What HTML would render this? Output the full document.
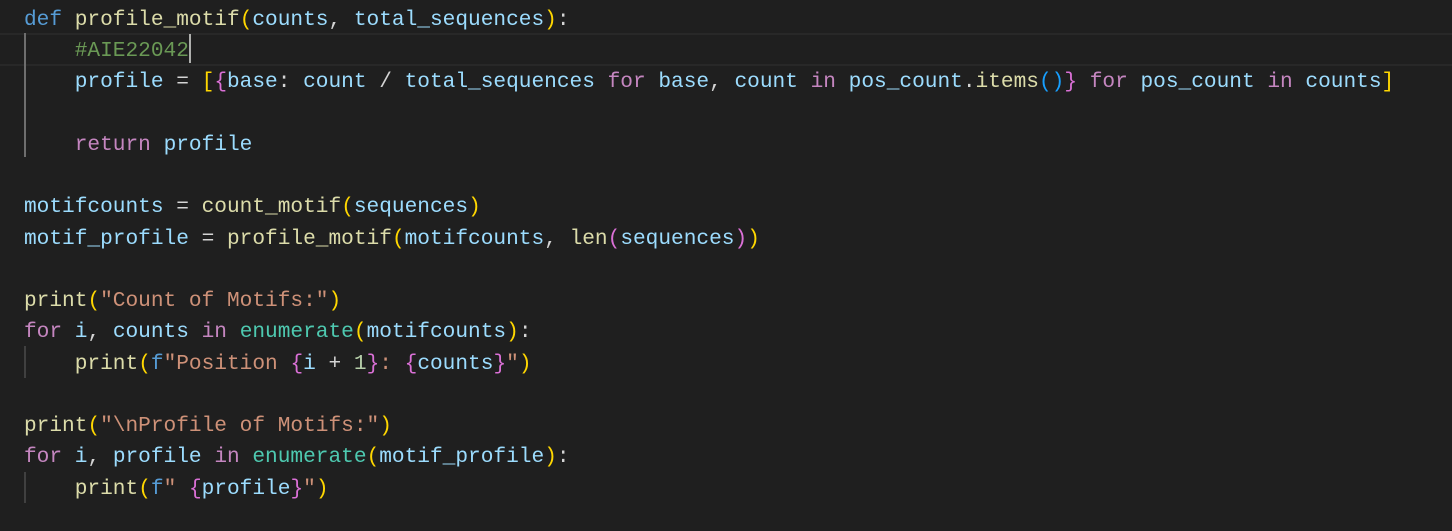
<!DOCTYPE html>
<html><head><meta charset="utf-8"><style>
body{margin:0;background:#1f1f1f;width:1452px;height:531px;overflow:hidden;position:relative}
.l{position:absolute;left:24px;height:31px;line-height:31px;font-family:"Liberation Mono",monospace;font-size:21.15px;color:#d4d4d4;white-space:pre}
.k{color:#569cd6}.f{color:#dcdcaa}.v{color:#9cdcfe}.c{color:#c586c0}.m{color:#6a9955}.s{color:#ce9178}.t{color:#4ec9b0}.n{color:#b5cea8}
.b1{color:#ffd700}.b2{color:#da70d6}.b3{color:#179fff}
.g{position:absolute;left:24px;width:2px;background:#404040}
</style></head><body>
<div style="position:absolute;left:0;top:33px;width:1452px;height:29px;border-top:2px solid #282828;border-bottom:2px solid #282828"></div>
<div class="g" style="top:33px;height:124px;background:#6e6e6e"></div>
<div class="g" style="top:346px;height:32px"></div>
<div class="g" style="top:472px;height:31px"></div>
<div style="position:absolute;left:189px;top:34px;width:2px;height:29px;background:#aeafad"></div>
<div class="l" style="top:5px"><span class="k">def</span> <span class="f">profile_motif</span><span class="b1">(</span><span class="v">counts</span>, <span class="v">total_sequences</span><span class="b1">)</span>:</div>
<div class="l" style="top:36px">    <span class="m">#AIE22042</span></div>
<div class="l" style="top:67px">    <span class="v">profile</span> = <span class="b1">[</span><span class="b2">{</span><span class="v">base</span>: <span class="v">count</span> / <span class="v">total_sequences</span> <span class="c">for</span> <span class="v">base</span>, <span class="v">count</span> <span class="c">in</span> <span class="v">pos_count</span>.<span class="f">items</span><span class="b3">()</span><span class="b2">}</span> <span class="c">for</span> <span class="v">pos_count</span> <span class="c">in</span> <span class="v">counts</span><span class="b1">]</span></div>
<div class="l" style="top:130px">    <span class="c">return</span> <span class="v">profile</span></div>
<div class="l" style="top:192px"><span class="v">motifcounts</span> = <span class="f">count_motif</span><span class="b1">(</span><span class="v">sequences</span><span class="b1">)</span></div>
<div class="l" style="top:224px"><span class="v">motif_profile</span> = <span class="f">profile_motif</span><span class="b1">(</span><span class="v">motifcounts</span>, <span class="f">len</span><span class="b2">(</span><span class="v">sequences</span><span class="b2">)</span><span class="b1">)</span></div>
<div class="l" style="top:286px"><span class="f">print</span><span class="b1">(</span><span class="s">"Count of Motifs:"</span><span class="b1">)</span></div>
<div class="l" style="top:317px"><span class="c">for</span> <span class="v">i</span>, <span class="v">counts</span> <span class="c">in</span> <span class="t">enumerate</span><span class="b1">(</span><span class="v">motifcounts</span><span class="b1">)</span>:</div>
<div class="l" style="top:349px">    <span class="f">print</span><span class="b1">(</span><span class="k">f</span><span class="s">"Position </span><span class="b2">{</span><span class="v">i</span> + <span class="n">1</span><span class="b2">}</span><span class="s">: </span><span class="b2">{</span><span class="v">counts</span><span class="b2">}</span><span class="s">"</span><span class="b1">)</span></div>
<div class="l" style="top:411px"><span class="f">print</span><span class="b1">(</span><span class="s">"\nProfile of Motifs:"</span><span class="b1">)</span></div>
<div class="l" style="top:442px"><span class="c">for</span> <span class="v">i</span>, <span class="v">profile</span> <span class="c">in</span> <span class="t">enumerate</span><span class="b1">(</span><span class="v">motif_profile</span><span class="b1">)</span>:</div>
<div class="l" style="top:474px">    <span class="f">print</span><span class="b1">(</span><span class="k">f</span><span class="s">" </span><span class="b2">{</span><span class="v">profile</span><span class="b2">}</span><span class="s">"</span><span class="b1">)</span></div>
</body></html>
